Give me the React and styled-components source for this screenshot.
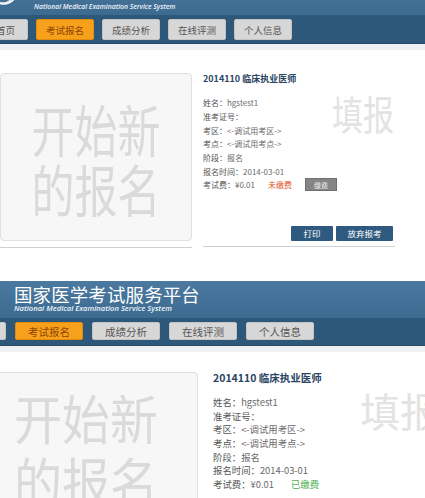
import React from 'react'
import styled, { createGlobalStyle } from 'styled-components'

const GlobalStyle = createGlobalStyle`
    html, body {
        margin: 0;
        padding: 0;
        background: #fff;
    }
    body {
        font-family: "Noto Sans CJK SC", "Noto Sans", sans-serif;
    }
`;

const Page = styled.div`
    width: 425px;
    height: 498px;
    overflow: hidden;
    background: #fff;
    display: flex;
    flex-direction: column;
`;

const Shot = styled.section`
    flex: none;
    height: ${p => p.$h}px;
    overflow: hidden;
    display: flex;
    flex-direction: column;
    background: #fff;
`;

const Header = styled.header`
    flex: none;
    box-sizing: border-box;
    height: ${p => p.$h}px;
    margin-top: ${p => -p.$cut}px;
    padding: 0 0 ${p => p.$padB}px ${p => p.$pad}px;
    display: flex;
    align-items: flex-end;
    gap: 16px;
    background: linear-gradient(180deg, #4b79a0 0%, #3d6a8f 100%);
`;

const Logo = styled.svg`
    flex: none;
    width: 30px;
    height: 30px;
    margin: 0 0 3px -12px;
`;

const Titles = styled.div`
    display: flex;
    flex-direction: column;
    color: #fff;
`;

const SiteName = styled.div`
    font-size: ${p => p.$fs}px;
    line-height: 20px;
    margin-bottom: ${p => p.$gap}px;
    letter-spacing: 0.2px;
    font-weight: 400;
    white-space: nowrap;
`;

const SiteSub = styled.div`
    font-family: "Open Sans", "Liberation Sans", sans-serif;
    font-style: italic;
    font-weight: 600;
    font-size: ${p => p.$fs}px;
    line-height: 9px;
    white-space: nowrap;
    color: #eef4fa;
`;

const Nav = styled.nav`
    flex: none;
    box-sizing: border-box;
    height: ${p => p.$h}px;
    margin-left: ${p => p.$shift}px;
    padding-top: 4px;
    display: flex;
    align-items: flex-start;
    gap: ${p => p.$gap}px;
    background: #2e5879;
    border-bottom: 1px solid #24496a;
`;

const Tab = styled.div`
    flex: none;
    box-sizing: border-box;
    width: ${p => p.$w}px;
    height: ${p => p.$h}px;
    border-radius: 2px;
    display: flex;
    align-items: center;
    justify-content: center;
    font-size: ${p => p.$fs}px;
    color: ${p => (p.$active ? '#8c4500' : '#555')};
    background: ${p => (p.$active ? '#f7a01c' : '#d7d7d7')};
    border: 1px solid ${p => (p.$active ? '#e08c0c' : '#c4c4c4')};
`;

const Strip = styled.div`
    flex: none;
    height: 6px;
    background: #eef0f2;
`;

const Body = styled.div`
    flex: none;
    display: flex;
    align-items: flex-start;
    padding-top: ${p => p.$top}px;
    gap: ${p => p.$gap}px;
    margin-left: ${p => p.$shift}px;
`;

const LeftCol = styled.div`
    flex: none;
    width: ${p => p.$w}px;
    display: flex;
    flex-direction: column;
`;

const NewCard = styled.div`
    box-sizing: border-box;
    height: ${p => p.$h}px;
    background: #f7f7f7;
    border: 1px solid #e0e0e0;
    border-radius: 4px;
    display: flex;
    align-items: center;
    justify-content: center;
`;

const BigText = styled.div`
    font-size: ${p => p.$fs}px;
    line-height: ${p => p.$lh}px;
    color: #dadada;
    text-align: center;
    transform: scaleY(${p => p.$sy});
    white-space: nowrap;
`;

const Rule = styled.div`
    height: 1px;
    margin-top: ${p => p.$gap}px;
    background: #cfcfcf;
`;

const InfoCol = styled.div`
    flex: none;
    position: relative;
    width: ${p => p.$w}px;
    display: flex;
    flex-direction: column;
`;

const ExamTitle = styled.div`
    font-size: ${p => p.$fs}px;
    line-height: 12px;
    font-weight: 700;
    color: #2b4563;
    white-space: nowrap;
`;

const Rows = styled.div`
    margin-top: ${p => p.$gap}px;
    display: flex;
    flex-direction: column;
    font-size: ${p => p.$fs}px;
    color: #6a6a6a;
`;

const Row = styled.div`
    height: 13.7px;
    display: flex;
    align-items: center;
    white-space: nowrap;
`;

const Label = styled.span`
    color: #555;
`;

const Status = styled.span`
    margin-left: ${p => p.$gap}px;
    color: ${p => (p.$paid ? '#4cae4c' : '#e0562a')};
`;

const PayBtn = styled.span`
    margin-left: 13px;
    width: 30px;
    height: 11px;
    display: inline-flex;
    align-items: center;
    justify-content: center;
    background: #858585;
    border: 1px solid #6f6f6f;
    color: #f2f2f2;
    font-size: 7px;
`;

const Actions = styled.div`
    margin-top: 34px;
    padding-right: 2px;
    display: flex;
    justify-content: flex-end;
    gap: 3px;
`;

const ActBtn = styled.div`
    box-sizing: border-box;
    width: ${p => p.$w}px;
    height: 15px;
    display: flex;
    align-items: center;
    justify-content: center;
    background: #2d5a7e;
    border-radius: 1px;
    color: #fff;
    font-size: 8.5px;
`;

const Watermark = styled.div`
    position: absolute;
    top: ${p => p.$top}px;
    left: ${p => p.$left}px;
    font-size: ${p => p.$fs}px;
    line-height: 1;
    color: #e3e3e3;
    transform: scaleY(${p => p.$sy});
    transform-origin: top left;
    white-space: nowrap;
    pointer-events: none;
`;

const tabs = ['考试报名', '成绩分析', '在线评测', '个人信息']

const Emblem = () => (
    <Logo viewBox="0 0 30 30">
        <circle cx="15" cy="14" r="11" fill="none" stroke="#e8f0f7" strokeWidth="1.2" />
        <path d="M3 19 C8 27 20 29 27 20" fill="none" stroke="#fff" strokeWidth="1.6" />
        <path d="M9 24 C14 26 20 25 23 22" fill="none" stroke="#dce8f2" strokeWidth="1" />
    </Logo>
)

const Portal = ({ c, paid }) => (
    <>
        <Header $h={c.headH} $cut={c.headCut} $pad={c.headPad} $padB={c.headPadB}>
            {c.logo && <Emblem />}
            <Titles>
                <SiteName $fs={c.nameFs} $gap={c.nameGap}>国家医学考试服务平台</SiteName>
                <SiteSub $fs={c.subFs}>National Medical Examination Service System</SiteSub>
            </Titles>
        </Header>
        <Nav $h={c.navH} $shift={c.navShift} $gap={c.tabGap}>
            <Tab $w={c.homeW} $h={c.tabH} $fs={c.tabFs}>首页</Tab>
            {tabs.map((t, i) => (
                <Tab key={t} $w={c.tabW} $h={c.tabH} $fs={c.tabFs} $active={i === 0}>{t}</Tab>
            ))}
        </Nav>
        <Strip />
        <Body $top={c.bodyTop} $gap={c.colGap} $shift={c.bodyShift}>
            <LeftCol $w={c.cardW}>
                <NewCard $h={c.cardH}>
                    <BigText $fs={c.bigFs} $lh={c.bigLh} $sy={c.bigSy}>开始新<br />的报名</BigText>
                </NewCard>
                <Rule $gap={6} />
            </LeftCol>
            <InfoCol $w={c.infoW}>
                <Watermark $top={c.wmTop} $left={c.wmLeft} $fs={c.wmFs} $sy={c.wmSy}>填报</Watermark>
                <ExamTitle $fs={c.titleFs}>2014110 临床执业医师</ExamTitle>
                <Rows $gap={c.rowsGap} $fs={c.rowFs}>
                    <Row><Label>姓名：</Label>hgstest1</Row>
                    <Row><Label>准考证号：</Label></Row>
                    <Row><Label>考区：</Label>&lt;-调试用考区-&gt;</Row>
                    <Row><Label>考点：</Label>&lt;-调试用考点-&gt;</Row>
                    <Row><Label>阶段：</Label>报名</Row>
                    <Row><Label>报名时间：</Label>2014-03-01</Row>
                    <Row>
                        <Label>考试费：</Label>¥0.01
                        <Status $paid={paid} $gap={c.statusGap}>{paid ? '已缴费' : '未缴费'}</Status>
                        {!paid && <PayBtn>缴费</PayBtn>}
                    </Row>
                </Rows>
                <Actions>
                    <ActBtn $w={42}>打印</ActBtn>
                    <ActBtn $w={57}>放弃报考</ActBtn>
                </Actions>
                <Rule $gap={5} />
            </InfoCol>
        </Body>
    </>
)

const first = {
    logo: true, headH: 36, headCut: 21, headPad: 0, headPadB: 4, nameFs: 17, nameGap: 6, subFs: 6.8,
    navH: 29, navShift: -17, tabGap: 8, homeW: 45, tabW: 58, tabH: 21, tabFs: 9.5,
    bodyTop: 23, colGap: 11, bodyShift: 0, cardW: 192, cardH: 168, bigFs: 43, bigLh: 46, bigSy: 1.3,
    infoW: 192, wmTop: 19, wmLeft: 129, wmFs: 31, wmSy: 1.3, titleFs: 9, rowsGap: 11, rowFs: 8, statusGap: 13,
}

const second = {
    logo: false, headH: 37, headCut: 0, headPad: 14, headPadB: 5, nameFs: 18.4, nameGap: 0, subFs: 7.6,
    navH: 28, navShift: -46, tabGap: 9, homeW: 52, tabW: 68, tabH: 18, tabFs: 10.5,
    bodyTop: 20, colGap: 15, bodyShift: -26, cardW: 224, cardH: 151, bigFs: 48, bigLh: 56, bigSy: 1.12,
    infoW: 215, wmTop: 18, wmLeft: 147, wmFs: 40, wmSy: 1, titleFs: 10.5, rowsGap: 11, rowFs: 9.4, statusGap: 17,
}

const App = () => {
    return (
        <Page>
            <GlobalStyle />
            <Shot $h={281}>
                <Portal c={first} paid={false} />
            </Shot>
            <Shot $h={217}>
                <Portal c={second} paid />
            </Shot>
        </Page>
    )
}

export default App
